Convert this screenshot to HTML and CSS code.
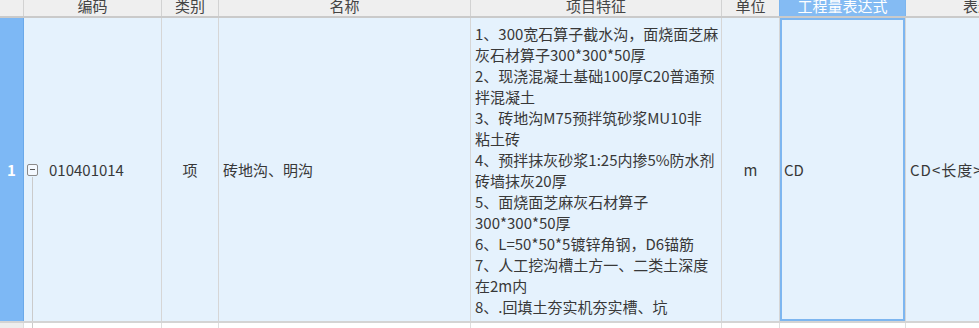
FILE: index.html
```html
<!DOCTYPE html>
<html>
<head>
    <link rel="stylesheet" href="styles.css">
</head>
<body>
<div id="sheet">
    <div class="row head">
        <div class="cell"></div>
        <div class="cell"><span>编码</span></div>
        <div class="cell"><span>类别</span></div>
        <div class="cell"><span>名称</span></div>
        <div class="cell"><span>项目特征</span></div>
        <div class="cell"><span>单位</span></div>
        <div class="cell sel"><span>工程量表达式</span></div>
        <div class="cell"><span>表达式说明</span></div>
    </div>
    <div class="row body">
        <div class="cell num">1</div>
        <div class="cell code">
            <span class="fold"></span>
            <span>010401014</span>
        </div>
        <div class="cell center">项</div>
        <div class="cell left">砖地沟、明沟</div>
        <div class="cell desc">
            <div>1、300宽石算子截水沟，面烧面芝麻</div>
            <div>灰石材算子300*300*50厚</div>
            <div>2、现浇混凝土基础100厚C20普通预</div>
            <div>拌混凝土</div>
            <div>3、砖地沟M75预拌筑砂浆MU10非</div>
            <div>粘土砖</div>
            <div>4、预拌抹灰砂浆1:25内掺5%防水剂</div>
            <div>砖墙抹灰20厚</div>
            <div>5、面烧面芝麻灰石材算子</div>
            <div>300*300*50厚</div>
            <div>6、L=50*50*5镀锌角钢，D6锚筋</div>
            <div>7、人工挖沟槽土方一、二类土深度</div>
            <div>在2m内</div>
            <div>8、.回填土夯实机夯实槽、坑</div>
        </div>
        <div class="cell center">m</div>
        <div class="cell left sel">CD</div>
        <div class="cell left expr">CD&lt;长度&gt;</div>
    </div>
    <div class="row next">
        <div class="cell num-off"></div>
        <div class="cell code"></div>
        <div class="cell"></div>
        <div class="cell"></div>
        <div class="cell"></div>
        <div class="cell"></div>
        <div class="cell"></div>
        <div class="cell"></div>
    </div>
</div>
</body>
</html>
```

FILE: styles.css
```css
body {
    margin: 0;
    padding: 0;
    font-family: "Noto Sans CJK SC", "Noto Sans", sans-serif;
    font-size: 15px;
    color: #383838;
    overflow: hidden;
}

#sheet {
    width: 979px;
    height: 328px;
    overflow: hidden;
}

.row {
    display: grid;
    grid-template-columns: 24px 138px 57px 252px 251px 58px 126px 189px;
}

.cell {
    box-sizing: border-box;
    border-right: 1px solid #d6d6d6;
    overflow: hidden;
    white-space: nowrap;
}

/* header, scrolled so the text is cut at the top */
.head {
    height: 18px;
    background-color: #efefef;
    border-bottom: 2px solid #cacaca;
    box-sizing: border-box;
}

.head .cell {
    display: flex;
    justify-content: center;
    align-items: flex-end;
    line-height: 15px;
    padding-bottom: 3px;
    border-right-color: #d2d2d2;
    color: #444;
}

.head .cell.sel {
    background-color: #84bbf3;
    color: #fff;
    border-right-color: #7db5ee;
    box-shadow: -1px 0 0 #7db5ee;
}

.head .cell:last-child {
    justify-content: flex-start;
    padding-left: 57px;
}

/* data row */
.body {
    height: 305px;
    background-color: #e5f2fd;
    border-bottom: 2px solid #d4d4d4;
    box-sizing: border-box;
}

.body .cell {
    display: flex;
    align-items: center;
}

.body .num {
    justify-content: center;
    background-color: #7db8f5;
    border-right-color: #6aa9ea;
    color: #fff;
    font-weight: bold;
}

.code {
    position: relative;
    padding-left: 3px;
}

.fold {
    position: relative;
    box-sizing: border-box;
    width: 11px;
    height: 12px;
    margin-right: 11px;
    border: 1px solid #8a8a8a;
    border-radius: 2px;
    background-color: #f4f9ff;
}

.fold::before {
    content: "";
    position: absolute;
    left: 2px;
    right: 2px;
    top: 4px;
    height: 1px;
    background-color: #555;
}

.code::after {
    content: "";
    position: absolute;
    left: 8px;
    top: 0;
    bottom: 0;
    width: 1px;
    background-color: #cbcbcb;
}

.body .code::after {
    top: 159px;
}

.center {
    justify-content: center;
}

.left {
    padding-left: 4px;
}

.expr {
    letter-spacing: 1px;
}

.body .desc {
    flex-direction: column;
    align-items: flex-start;
    justify-content: center;
    padding-left: 4px;
    line-height: 21px;
}

.body .sel {
    box-shadow: inset 0 0 0 2px #7db6f0;
    padding-left: 4px;
}

/* next row, only its top shows */
.next {
    height: 5px;
    background-color: #fff;
}

.next .cell {
    border-right-color: #dedede;
}

.next .num-off {
    background-color: #eeeeee;
}
```
